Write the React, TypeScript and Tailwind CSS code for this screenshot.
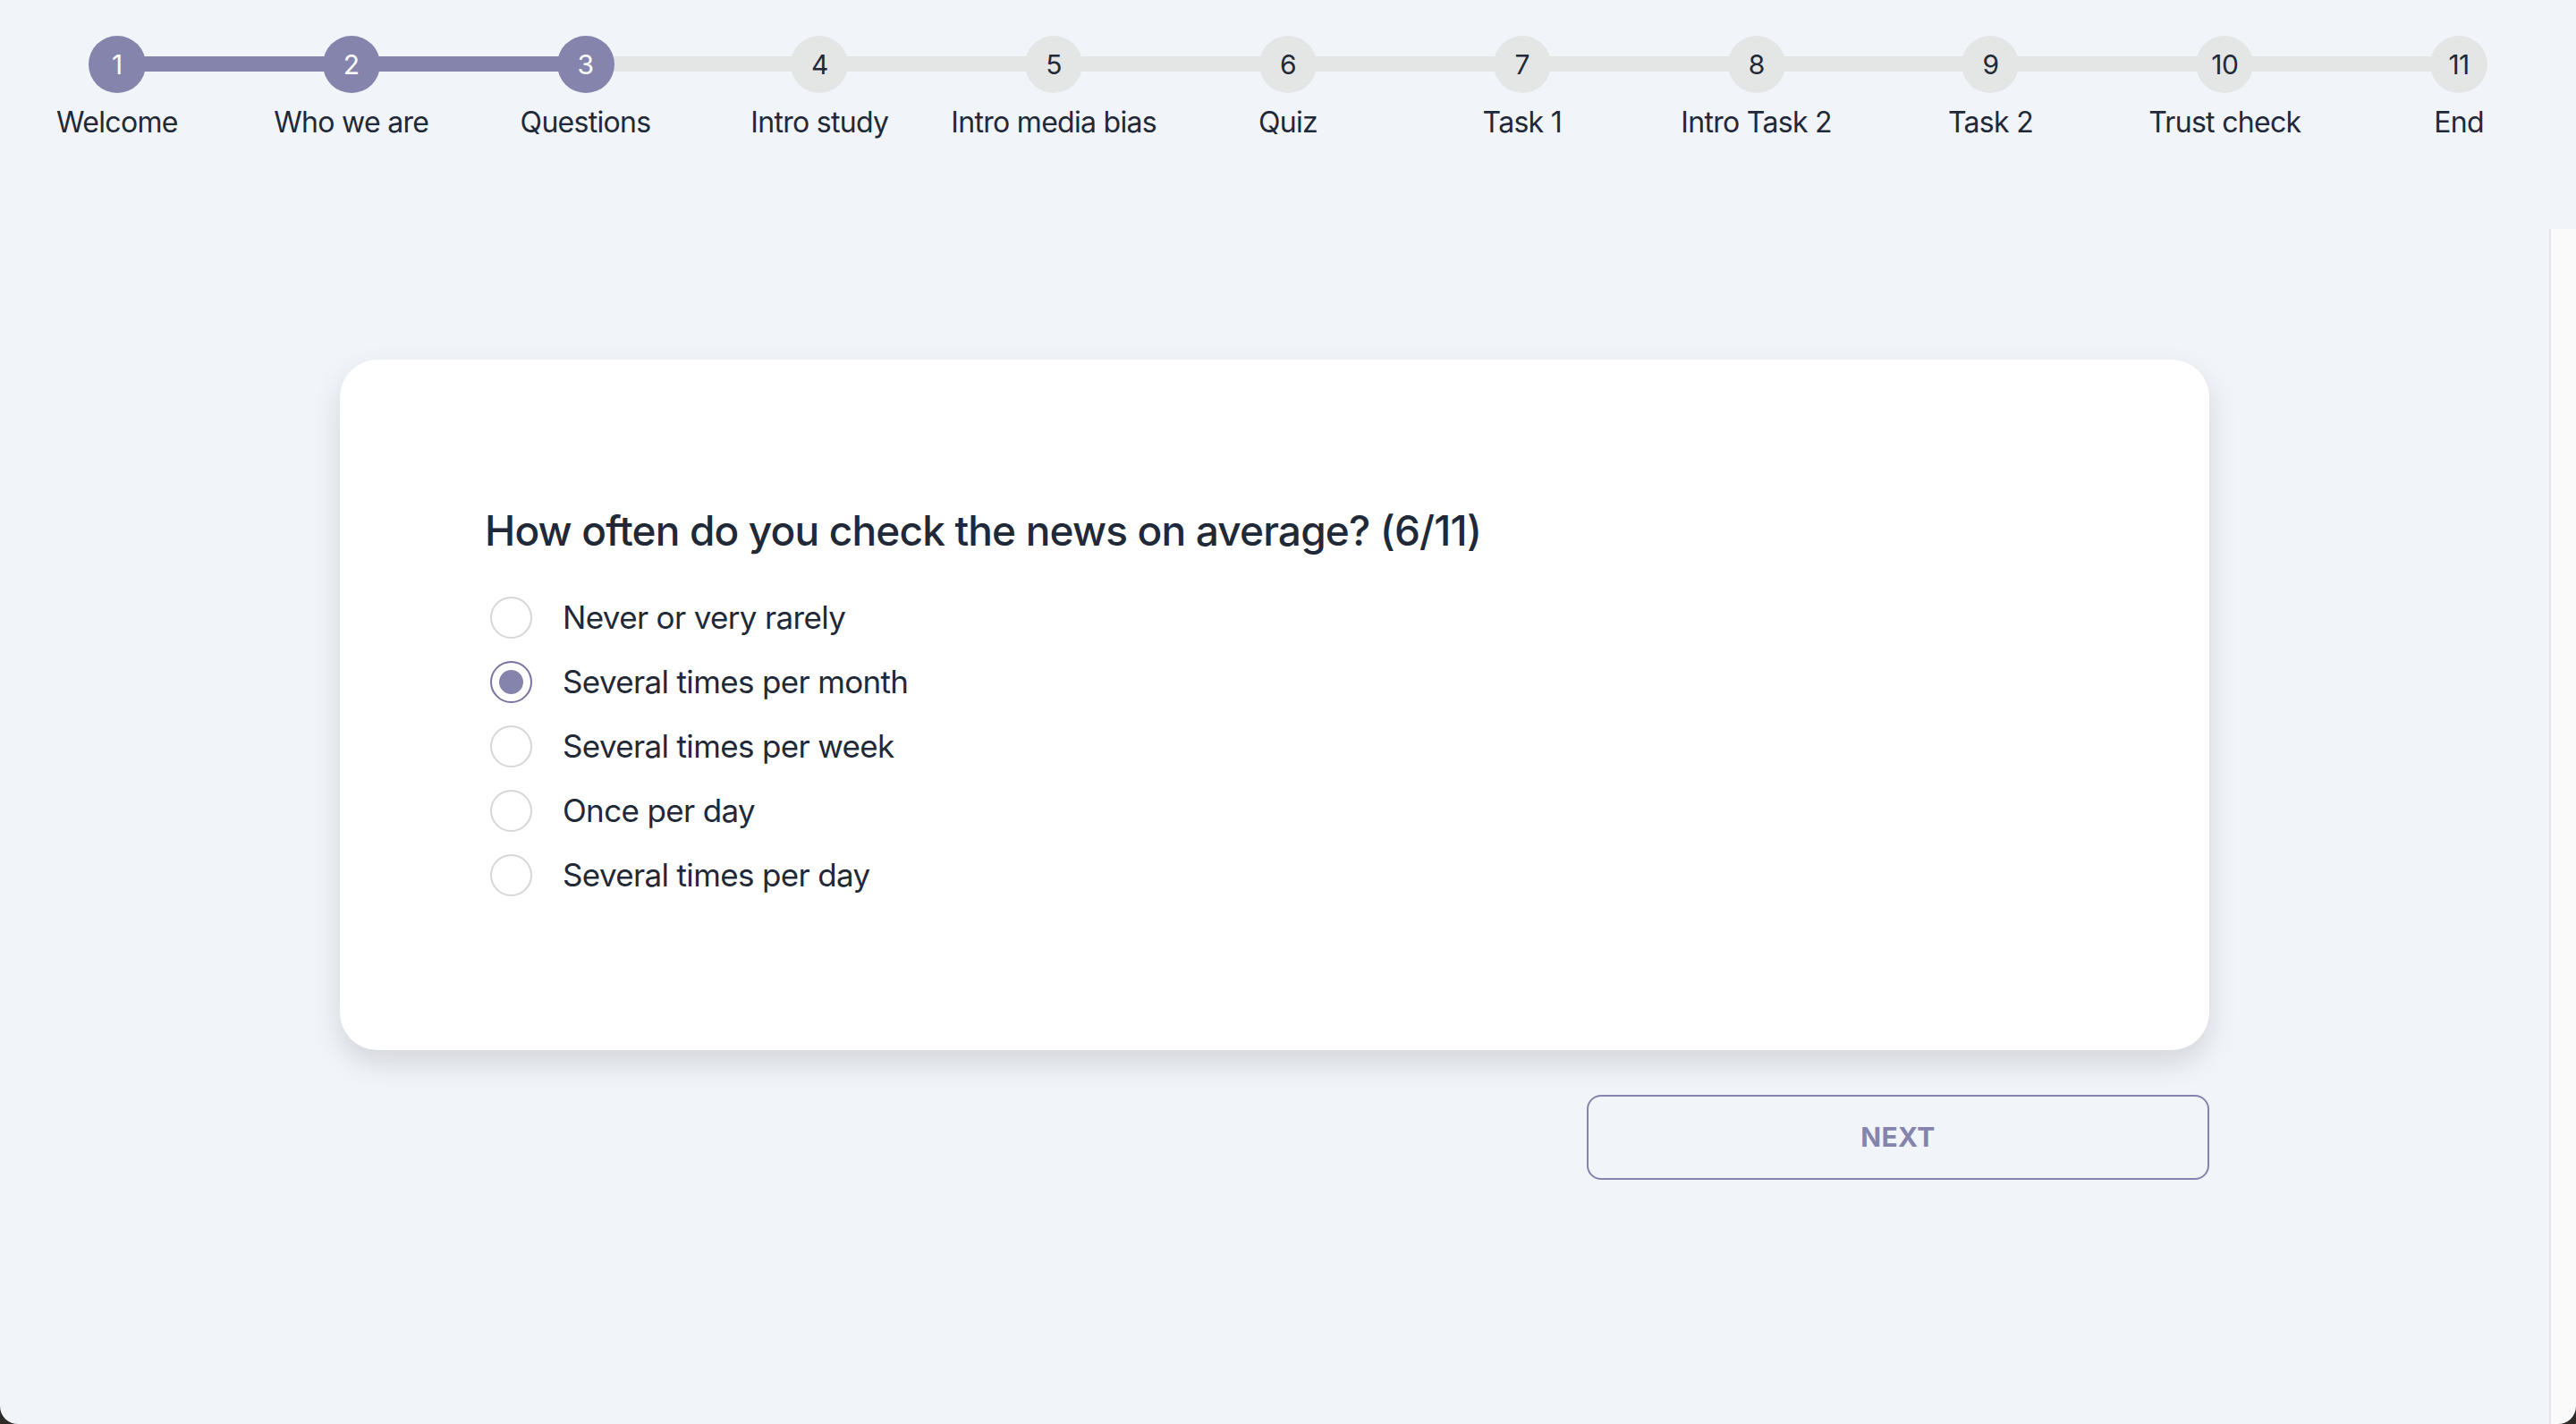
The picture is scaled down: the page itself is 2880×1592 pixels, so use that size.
const steps = [
  "Welcome",
  "Who we are",
  "Questions",
  "Intro study",
  "Intro media bias",
  "Quiz",
  "Task 1",
  "Intro Task 2",
  "Task 2",
  "Trust check",
  "End",
];

const options = [
  "Never or very rarely",
  "Several times per month",
  "Several times per week",
  "Once per day",
  "Several times per day",
];

const current = 3;
const selected = 1;

function Stepper() {
  return (
    <div className="grid h-[256px] shrink-0 grid-cols-11 pt-[40px]">
      {steps.map((label, i) => {
        const n = i + 1;
        const done = n <= current;
        const last = n === steps.length;
        return (
          <div key={label} className="relative flex flex-col items-center">
            {/* connector to next step */}
            {!last && (
              <div
                className={
                  n < current
                    ? "absolute left-1/2 top-[23px] h-[17px] w-full bg-[#8584ad]"
                    : "absolute left-1/2 top-[23px] h-[17px] w-full bg-[#e4e5e5]"
                }
              />
            )}
            <div
              className={
                done
                  ? "relative z-10 flex h-[64px] w-[64px] items-center justify-center rounded-full bg-[#8584ad] text-[30px] tracking-[-0.6px] text-white"
                  : "relative z-10 flex h-[64px] w-[64px] items-center justify-center rounded-full bg-[#e4e5e5] text-[30px] tracking-[-0.6px] text-[#1f2937]"
              }
            >
              {n}
            </div>
            <span className="mt-[9px] whitespace-nowrap text-[32px] leading-[48px] tracking-[-0.7px] text-[#1f2937]">
              {label}
            </span>
          </div>
        );
      })}
    </div>
  );
}

function Radio({ checked }: { checked: boolean }) {
  if (checked) {
    return (
      <div className="flex h-[47px] w-[47px] shrink-0 items-center justify-center rounded-full border-[2px] border-[#77749f] bg-white">
        <div className="h-[27px] w-[27px] rounded-full bg-[#8584ad]" />
      </div>
    );
  }
  return (
    <div className="h-[47px] w-[47px] shrink-0 rounded-full border-[2px] border-[#d6d6da] bg-white" />
  );
}

export default function App() {
  return (
    <div className="relative flex h-[1592px] w-full flex-col overflow-hidden bg-[#f1f4f9] font-['Inter','Liberation_Sans',sans-serif]">
      <Stepper />

      <div className="flex flex-1">
        <main className="flex-1 pt-[146px]">
          <div className="mx-auto w-[2090px]">
            {/* Question card */}
            <div className="rounded-[42px] bg-white pb-[160px] pl-[162px] pr-[160px] pt-[163px] shadow-[0_14px_32px_rgba(0,0,0,0.13)]">
              <h2 className="text-[46px] font-medium leading-[57px] tracking-[-0.85px] text-[#1f2937]">
                How often do you check the news on average? (6/11)
              </h2>
              <div className="mt-[32px] flex flex-col">
                {options.map((opt, i) => (
                  <label
                    key={opt}
                    className="flex h-[72px] cursor-pointer items-center gap-[34px] pl-[6px]"
                  >
                    <Radio checked={i === selected} />
                    <span className="text-[35px] tracking-[-0.65px] text-[#1f2937]">{opt}</span>
                  </label>
                ))}
              </div>
            </div>

            {/* Footer */}
            <div className="mt-[50px] flex justify-end">
              <button className="h-[95px] w-[696px] rounded-[16px] border-[2px] border-[#8584ad] text-[30px] font-bold tracking-[0.3px] text-[#8584ad]">
                NEXT
              </button>
            </div>
          </div>
        </main>

        {/* scrollbar track */}
        <div className="w-[30px] shrink-0 border-l-[2px] border-[#e6e6e6] bg-[#fafafa]" />
      </div>

      {/* window corners */}
      <div className="absolute bottom-0 left-0 h-[20px] w-[20px] bg-[#2e2a28]">
        <div className="h-full w-full rounded-bl-[20px] bg-[#f1f4f9]" />
      </div>
      <div className="absolute bottom-0 right-0 h-[20px] w-[20px] bg-[#2e2a28]">
        <div className="h-full w-full rounded-br-[20px] bg-[#fafafa]" />
      </div>
    </div>
  );
}
